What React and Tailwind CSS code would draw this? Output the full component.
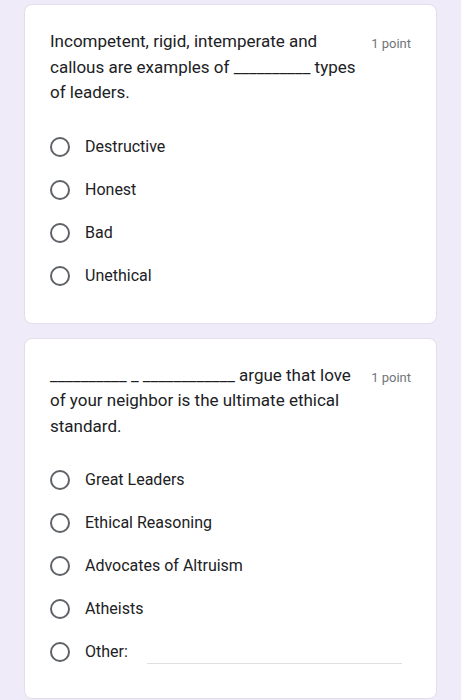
const Radio = ({ label }) => (
  <div className="flex items-center h-[43px]">
    <span className="w-5 h-5 rounded-full border-2 border-[#5f6368] shrink-0" />
    <span className="ml-[15px] text-[16px] text-[#202124]">{label}</span>
  </div>
);

const App = () => {
  return (
    <div
      className="w-[461px] h-[700px] overflow-hidden bg-[#efebf8] pt-1 px-6"
      style={{ fontFamily: "Roboto, 'Liberation Sans', sans-serif" }}
    >
      {/* question 1 */}
      <div className="bg-white rounded-lg border border-[#e2deea] pt-[24px] pb-[25px] px-[25px]">
        <div className="flex justify-between">
          <div className="w-[314px] text-[17px] leading-[25.5px] text-[#202124]">
            Incompetent, rigid, intemperate and callous are examples of __________ types of leaders.
          </div>
          <div className="text-[13px] leading-[25px] text-[#70757a] pt-[2px]">1 point</div>
        </div>
        <div className="mt-5">
          <Radio label="Destructive" />
          <Radio label="Honest" />
          <Radio label="Bad" />
          <Radio label="Unethical" />
        </div>
      </div>

      {/* question 2 */}
      <div className="mt-[14px] bg-white rounded-lg border border-[#e2deea] pt-[24px] pb-[25px] px-[25px]">
        <div className="flex justify-between">
          <div className="w-[314px] text-[17px] leading-[25.5px] text-[#202124]">
            __________ _ ____________ argue that love of your neighbor is the ultimate ethical standard.
          </div>
          <div className="text-[13px] leading-[25px] text-[#70757a] pt-[2px]">1 point</div>
        </div>
        <div className="mt-[19px]">
          <Radio label="Great Leaders" />
          <Radio label="Ethical Reasoning" />
          <Radio label="Advocates of Altruism" />
          <Radio label="Atheists" />
          <div className="flex items-center h-[43px]">
            <span className="w-5 h-5 rounded-full border-2 border-[#5f6368] shrink-0" />
            <span className="ml-[15px] text-[16px] text-[#202124]">Other:</span>
            <span className="ml-[19px] mt-[24px] h-px w-[255px] bg-[#e0e0e0]" />
          </div>
        </div>
      </div>
    </div>
  );
};

export default App;
